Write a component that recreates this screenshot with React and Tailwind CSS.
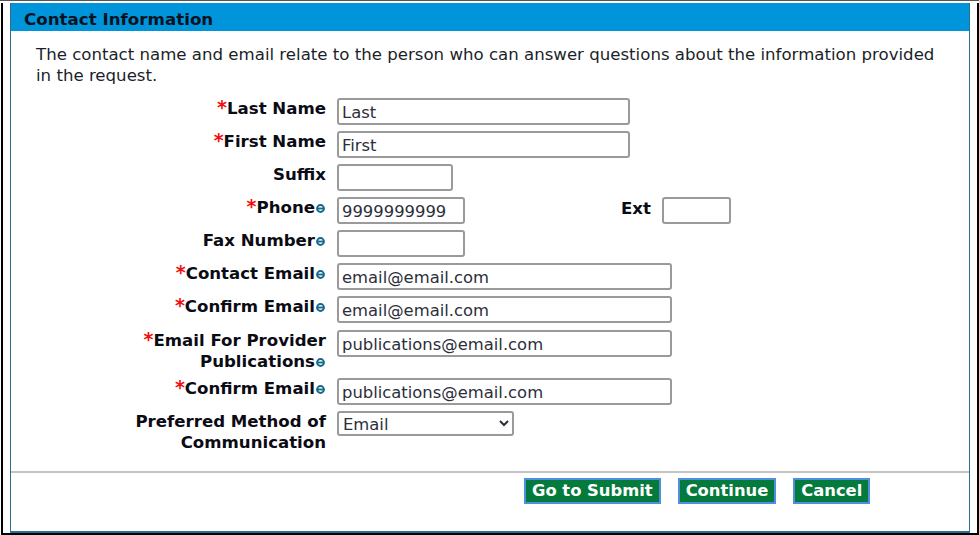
function Info() {
  return (
    <svg width="9" height="9" viewBox="0 0 10 10" className="mx-px shrink-0">
      <circle cx="5" cy="5" r="3.8" fill="none" stroke="#14688c" strokeWidth="2.2" />
      <rect x="2" y="4" width="6" height="2" fill="#14688c" />
    </svg>
  );
}

function Label({ req, info, children }) {
  return (
    <div className="w-[315px] shrink-0 text-right font-bold text-[16.6px] leading-[21px] text-[#0b0b14]">
      {req && <span className="text-[#f01010] text-[19px] leading-none">*</span>}
      {children}
      {info && <span className="inline-block"><Info /></span>}
    </div>
  );
}

function Field({ value = "", w }) {
  return (
    <input
      readOnly
      value={value}
      className={`${w} h-[27px] shrink-0 bg-white border-2 border-[#9a9a9a] rounded-[3px] px-[3px] pt-px text-[16.4px] text-[#2b2f3a] outline-none`}
    />
  );
}

function Row({ label, req, info, value, w, className = "mb-[6px]" }) {
  return (
    <div className={`flex gap-[11px] ${className}`}>
      <Label req={req} info={info}>{label}</Label>
      <Field value={value} w={w} />
    </div>
  );
}

function Btn({ children }) {
  return (
    <button className="h-[26px] px-[6px] pt-px bg-[#047a3c] border-2 border-[#4f8fdc] text-white font-bold text-[16.35px] leading-none">
      {children}
    </button>
  );
}

export default function App() {
  return (
    <div className="w-[979px] h-[535px] bg-white border-t border-[#555] pt-[2px] overflow-hidden font-['DejaVu_Sans',sans-serif]">
      <div className="h-[532px] ml-px border-x-2 border-b-2 border-black px-[7px]">
        <div className="h-[530px] border-x border-b-2 border-[#2b6f94] flex flex-col">
          <div className="h-[28px] bg-[#0095db] pl-[13px] font-bold text-[16.7px] leading-[33px] text-[#08131f]">Contact Information</div>
          <p className="pl-[25px] pr-[30px] pt-[13px] mb-[12px] text-[16.6px] leading-[21px] text-[#1b1f2a]">
            The contact name and email relate to the person who can answer questions about the information provided in the request.
          </p>
          <div>
            <Row label="Last Name" req value="Last" w="w-[293px]" />
            <Row label="First Name" req value="First" w="w-[293px]" />
            <Row label="Suffix" w="w-[116px]" />
            <div className="flex gap-[11px] mb-[6px]">
              <Label req info>Phone</Label>
              <Field value="9999999999" w="w-[128px]" />
              <div className="ml-[145px] w-[30px] pt-px font-bold text-[16.6px] leading-[21px] text-[#0b0b14]">Ext</div>
              <Field w="w-[69px]" />
            </div>
            <Row label="Fax Number" info w="w-[128px]" />
            <Row label="Contact Email" req info value="email@email.com" w="w-[335px]" />
            <Row label="Confirm Email" req info value="email@email.com" w="w-[335px]" className="mb-[7px]" />
            <div className="flex gap-[11px] h-[48px]">
              <Label req info>Email For Provider<br />Publications</Label>
              <Field value="publications@email.com" w="w-[335px]" />
            </div>
            <Row label="Confirm Email" req info value="publications@email.com" w="w-[335px]" />
            <div className="flex gap-[11px]">
              <Label>Preferred Method of<br />Communication</Label>
              <select className="w-[177px] h-[25px] pt-px bg-white border-2 border-[#9a9a9a] rounded-[3px] text-[16.4px] text-[#2b2f3a] outline-none">
                <option>Email</option>
              </select>
            </div>
          </div>
          <div className="mt-[18px] border-t-2 border-[#c4c4c4] pt-[5px] pl-[513px] flex gap-[17px]">
            <Btn>Go to Submit</Btn>
            <Btn>Continue</Btn>
            <Btn>Cancel</Btn>
          </div>
        </div>
      </div>
    </div>
  );
}
